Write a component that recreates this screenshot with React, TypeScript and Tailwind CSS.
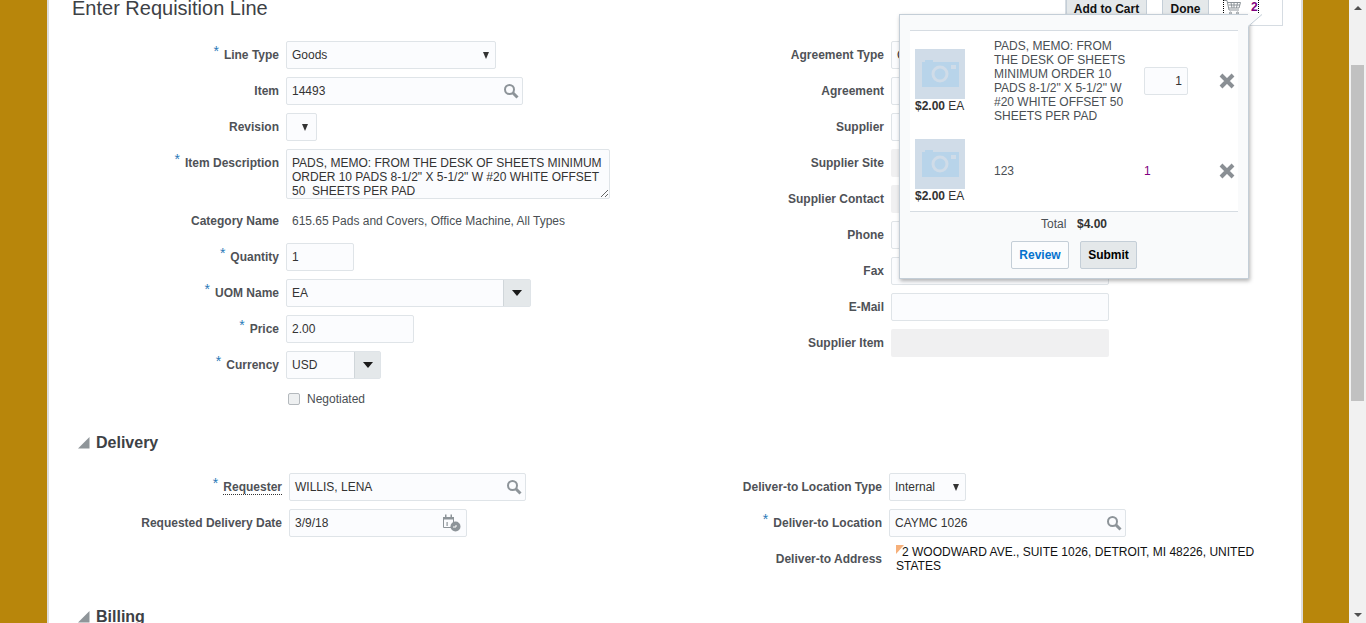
import type { ReactNode } from "react";

function Search() {
  return (
    <svg width="16" height="16" viewBox="0 0 16 16" fill="none" className="shrink-0">
      <circle cx="6.5" cy="6.5" r="4.5" stroke="#8d9499" strokeWidth="2" />
      <path d="M10 10l4.5 4.5" stroke="#8d9499" strokeWidth="3" />
    </svg>
  );
}

function Caret() {
  return <span className="h-0 w-0 border-x-[3.5px] border-t-[7px] border-x-transparent border-t-[#333]" />;
}

function BigCaret() {
  return <span className="h-0 w-0 border-x-[5px] border-t-[6px] border-x-transparent border-t-[#1a1a1a]" />;
}

function Disclosure() {
  return (
    <svg width="12" height="12" viewBox="0 0 12 12" className="shrink-0">
      <path d="M0 11.5L11.5 0v11.5z" fill="#8f9599" />
    </svg>
  );
}

function CloseIcon() {
  return (
    <svg width="16" height="16" viewBox="0 0 16 16">
      <path d="M2 2l12 12M14 2L2 14" stroke="#8a8f94" strokeWidth="4" />
    </svg>
  );
}

function CalendarIcon() {
  return (
    <svg width="18" height="18" viewBox="0 0 18 18" fill="none">
      <path d="M.5 3.5h10v10H.5z" stroke="#8d9499" strokeWidth="1" />
      <path d="M0 3h11v2.5H0zM2 .5h1.5V3H2zM7.5.5H9V3H7.5z" fill="#8d9499" />
      <path d="M3.5 8h1.2v4H3.5z" fill="#8d9499" />
      <circle cx="12.5" cy="12.5" r="5" fill="#8d9499" />
      <path d="M10 13h3v-2" stroke="#fff" strokeWidth="1" />
    </svg>
  );
}

function CartIcon() {
  return (
    <svg width="18" height="15" viewBox="0 0 18 15" fill="none" stroke="#8d9499" strokeWidth="1">
      <path d="M0 .5h3l2 9.5h10" />
      <path d="M3.5 2.5h13l-1.5 5.5H5M7 2.5L8 8M10 2.5V8M13.5 2.5L12.5 8M4.5 5h11.5" />
      <circle cx="6.5" cy="13" r="1" />
      <circle cx="13.5" cy="13" r="1" />
    </svg>
  );
}

function Thumb() {
  return (
    <div className="flex h-[50px] w-[50px] items-center justify-center bg-[#d0dce8]">
      <svg width="37" height="30" viewBox="0 0 37 30">
        <path d="M0 3h3V1h8v2h26v25H0z" fill="#b8d4ea" />
        <circle cx="18" cy="15" r="7" fill="none" stroke="#d0dce8" strokeWidth="3" />
        <rect x="29" y="6" width="5" height="4" fill="#d0dce8" />
      </svg>
    </div>
  );
}

const inputBox = "flex h-7 items-center rounded-[2px] border border-[#dfe4e8] bg-[#fbfcfe] text-xs text-[#333]";

function Label({ text, req, width }: { text: string; req?: boolean; width: string }) {
  return (
    <div className={`${width} shrink-0 pr-[7px] text-right text-xs font-bold text-[#4f5257]`}>
      {req && <span className="relative -top-[3px] mr-[5px] text-[14px] font-normal leading-none text-[#2a7ab8]">*</span>}
      {text}
    </div>
  );
}

function Row({ label, req, children }: { label: string; req?: boolean; children?: ReactNode }) {
  return (
    <div className="mb-2 flex min-h-7 items-center">
      <Label text={label} req={req} width="w-[238px]" />
      {children}
    </div>
  );
}

function SideRow({ label, gray, children }: { label: string; gray?: boolean; children?: ReactNode }) {
  return (
    <div className="mb-2 flex h-7 items-center">
      <Label text={label} width="w-[843px]" />
      <div className={gray ? "flex h-7 w-[218px] items-center rounded-[2px] bg-[#f0f0f1] px-[5px] text-xs" : `${inputBox} w-[218px] px-[5px]`}>
        {children}
      </div>
    </div>
  );
}

function CartLine({ desc, qty }: { desc: ReactNode; qty: ReactNode }) {
  return (
    <div className="flex h-[90px] items-center">
      <div className="ml-[5px] w-[79px] shrink-0 self-start pt-[13px]">
        <Thumb />
        <div className="whitespace-nowrap text-xs leading-[14px] text-[#333]">
          <b>$2.00</b> EA
        </div>
      </div>
      <div className="w-[150px] shrink-0 pr-[15px] text-xs leading-[14px] text-[#4a4f54]">{desc}</div>
      <div className="w-[75px] shrink-0 text-xs">{qty}</div>
      <CloseIcon />
    </div>
  );
}

function CartPopup() {
  return (
    <div className="absolute left-[851px] top-[14px] z-10 h-[265px] w-[350px] border border-[#c4ced7] bg-[#f9fafb] px-[10px] pt-[15px] shadow-[1px_2px_4px_rgba(0,0,0,0.3)]">
      <svg width="15" height="13" viewBox="0 0 15 13" className="absolute -right-[15px] -top-[1px]">
        <path d="M0 13L14 0H0z" fill="#f9fafb" />
        <path d="M0 12.5L14 .5" stroke="#c4ced7" fill="none" />
      </svg>
      <div className="h-[182px] border-y border-[#d6dce2] bg-white pt-[5px]">
        <CartLine
          desc={<>PADS, MEMO: FROM THE DESK OF SHEETS MINIMUM ORDER 10 PADS 8-1/2" X 5-1/2" W #20 WHITE OFFSET 50 SHEETS PER PAD</>}
          qty={
            <div className="flex h-7 w-11 items-center justify-end rounded-[2px] border border-[#dfe4e8] bg-[#fbfcfe] pr-[5px] text-[#333]">1</div>
          }
        />
        <CartLine desc="123" qty={<span className="text-[#800080]">1</span>} />
      </div>
      <div className="flex h-[24px] items-center pl-[131px] text-xs text-[#4a4f54]">
        <span className="w-[36px]">Total</span>
        <b className="text-[#333]">$4.00</b>
      </div>
      <div className="mt-[5px] flex gap-[11px] pl-[101px]">
        <button className="h-7 w-[58px] rounded-[2px] border border-[#c4ced7] bg-[#fbfcfd] text-xs font-bold text-[#0572ce]">Review</button>
        <button className="h-7 w-[57px] rounded-[2px] border border-[#c4ced7] bg-[#e4e8ea] text-xs font-bold text-[#000]">Submit</button>
      </div>
    </div>
  );
}

export default function App() {
  return (
    <div className="flex h-[623px] overflow-hidden bg-white font-['Liberation_Sans',Arial,sans-serif]">
      <div className="w-[49px] shrink-0 border-r-2 border-[#dddddd] bg-[#b8860b]" />
      <main className="relative -ml-px w-[1255px] shrink-0 border-r-2 border-[#dddddd]">
        {/* toolbar, scrolled partly out of view */}
        <div className="absolute right-[18px] top-0 flex h-[26px] w-[218px] items-start border-x border-b border-[#d6dce2]">
          <button className="h-[15px] w-[81px] rounded-b-[2px] border-x border-b border-[#c4ced7] bg-[#e4e8ea] text-xs font-bold leading-[18px] text-[#111]">Add to Cart</button>
          <button className="ml-[15px] h-[15px] w-[47px] rounded-b-[2px] border-x border-b border-[#c4ced7] bg-[#e4e8ea] text-xs font-bold leading-[18px] text-[#111]">Done</button>
          <div className="ml-[14px] flex h-[15px] items-start gap-[9px] border-x border-b border-dotted border-black">
            <CartIcon />
            <span className="text-xs font-bold leading-[14px] text-[#800080]">2</span>
          </div>
        </div>

        <CartPopup />

        <h1 className="h-5 pl-6 text-xl font-normal leading-4 text-[#3d4145]">Enter Requisition Line</h1>

        <div className="flex h-[411px] items-start pt-[21px]">
          <div className="w-0">
            <div className="w-[640px]">
              <Row label="Line Type" req>
                <div className={`${inputBox} w-[210px] justify-between pl-[5px] pr-[6px]`}>Goods<Caret /></div>
              </Row>
              <Row label="Item">
                <div className={`${inputBox} w-[237px] justify-between pl-[5px] pr-[3px]`}>14493<Search /></div>
              </Row>
              <Row label="Revision">
                <div className={`${inputBox} w-[31px] justify-end pr-2`}><Caret /></div>
              </Row>
              <div className="mb-2 flex items-start">
                <div className="pt-[6px]"><Label text="Item Description" req width="w-[238px]" /></div>
                <div className="h-[50px] w-[324px] resize-y overflow-hidden rounded-[2px] border border-[#dfe4e8] bg-[#fbfcfe] px-[5px] pt-[6px] text-xs leading-[14px] text-[#333]">
                  PADS, MEMO: FROM THE DESK OF SHEETS MINIMUM ORDER 10 PADS 8-1/2" X 5-1/2" W #20 WHITE OFFSET 50&nbsp; SHEETS PER PAD
                </div>
              </div>
              <Row label="Category Name">
                <span className="pl-[6px] text-xs text-[#4a4f54]">615.65 Pads and Covers, Office Machine, All Types</span>
              </Row>
              <Row label="Quantity" req>
                <div className={`${inputBox} w-[68px] px-[5px]`}>1</div>
              </Row>
              <Row label="UOM Name" req>
                <div className={`${inputBox} w-[245px] pl-[5px]`}>
                  <span className="flex-1">EA</span>
                  <span className="flex h-full w-[27px] items-center justify-center border-l border-[#d0d6da] bg-[#e4e8ea]"><BigCaret /></span>
                </div>
              </Row>
              <Row label="Price" req>
                <div className={`${inputBox} w-[128px] px-[5px]`}>2.00</div>
              </Row>
              <Row label="Currency" req>
                <div className={`${inputBox} w-[95px] pl-[5px]`}>
                  <span className="flex-1">USD</span>
                  <span className="flex h-full w-[26px] items-center justify-center border-l border-[#d0d6da] bg-[#e4e8ea]"><BigCaret /></span>
                </div>
              </Row>
              <div className="mt-px flex h-6 items-center pl-[240px]">
                <span className="h-3 w-3 rounded-[2px] border border-[#b4b9bd] bg-[#eef0f1]" />
                <span className="pl-[7px] text-xs text-[#4a4f54]">Negotiated</span>
              </div>
            </div>
          </div>

          <div className="w-[1100px] shrink-0">
            <SideRow label="Agreement Type"><span className="text-[#333]">C</span></SideRow>
            <SideRow label="Agreement" />
            <SideRow label="Supplier" />
            <SideRow label="Supplier Site" gray />
            <SideRow label="Supplier Contact" gray />
            <SideRow label="Phone" />
            <SideRow label="Fax" />
            <SideRow label="E-Mail" />
            <SideRow label="Supplier Item" gray />
          </div>
        </div>

        <div className="flex h-6 items-center gap-[6px] pl-[30px] text-base font-bold text-[#3d4145]">
          <Disclosure />
          Delivery
        </div>

        <div className="flex h-[150px] items-start pt-[18px]">
          <div className="w-[600px] shrink-0">
            <div className="mb-2 flex h-7 items-center">
              <div className="w-[241px] shrink-0 pr-[7px] text-right text-xs font-bold text-[#4f5257]">
                <span className="relative -top-[3px] mr-[5px] text-[14px] font-normal leading-none text-[#2a7ab8]">*</span>
                <span className="border-b border-dotted border-[#333]">Requester</span>
              </div>
              <div className={`${inputBox} w-[237px] justify-between pl-[5px] pr-[3px]`}>WILLIS, LENA<Search /></div>
            </div>
            <div className="flex h-7 items-center">
              <Label text="Requested Delivery Date" width="w-[241px]" />
              <div className={`${inputBox} w-[178px] justify-between pl-[5px] pr-[5px]`}>3/9/18<CalendarIcon /></div>
            </div>
          </div>
          <div className="min-w-0 flex-1">
            <div className="mb-2 flex h-7 items-center">
              <Label text="Deliver-to Location Type" width="w-[241px]" />
              <div className={`${inputBox} w-[77px] justify-between pl-[5px] pr-[6px]`}>Internal<Caret /></div>
            </div>
            <div className="mb-2 flex h-7 items-center">
              <Label text="Deliver-to Location" req width="w-[241px]" />
              <div className={`${inputBox} w-[237px] justify-between pl-[5px] pr-[3px]`}>CAYMC 1026<Search /></div>
            </div>
            <div className="flex items-center">
              <Label text="Deliver-to Address" width="w-[241px]" />
              <div className="w-[366px] pl-[7px] text-xs leading-[14px] text-[#111]">
                <svg width="6" height="9" viewBox="0 0 6 9" className="inline-block overflow-visible align-top">
                  <path d="M0 0h8L0 9z" fill="#f6b07a" />
                </svg>
                2 WOODWARD AVE., SUITE 1026, DETROIT, MI 48226, UNITED STATES
              </div>
            </div>
          </div>
        </div>

        <div className="flex h-6 items-center gap-[6px] pl-[30px] text-base font-bold text-[#3d4145]">
          <Disclosure />
          Billing
        </div>
      </main>
      <div className="w-[46px] shrink-0 bg-[#b8860b]" />
      <div className="flex w-[17px] shrink-0 flex-col items-center bg-[#f1f1f1]">
        <span className="mt-[6px] h-0 w-0 border-x-[4px] border-b-[4px] border-x-transparent border-b-[#505050]" />
        <div className="mx-[2px] mt-[55px] h-[336px] w-[13px] bg-[#c1c1c1]" />
        <span className="mt-auto mb-[6px] h-0 w-0 border-x-[4px] border-t-[4px] border-x-transparent border-t-[#505050]" />
      </div>
    </div>
  );
}
